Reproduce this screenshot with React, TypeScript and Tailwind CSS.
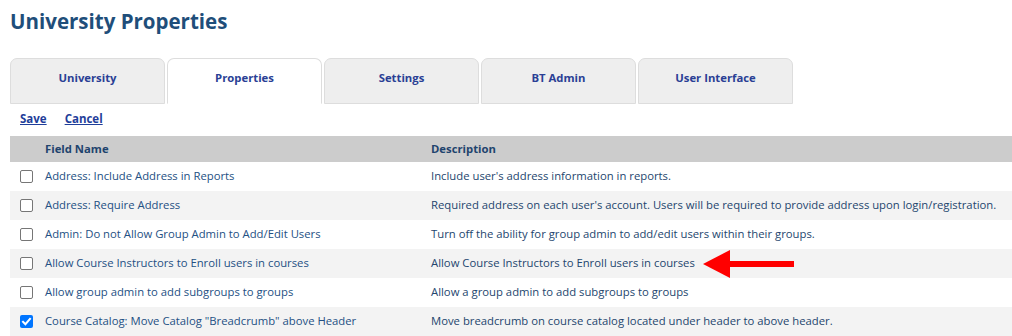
import React from "react";

const tabs = ["University", "Properties", "Settings", "BT Admin", "User Interface"];

const rows: { name: string; desc: string; checked?: boolean; arrow?: boolean }[] = [
  { name: "Address: Include Address in Reports", desc: "Include user's address information in reports." },
  { name: "Address: Require Address", desc: "Required address on each user's account. Users will be required to provide address upon login/registration." },
  { name: "Admin: Do not Allow Group Admin to Add/Edit Users", desc: "Turn off the ability for group admin to add/edit users within their groups." },
  { name: "Allow Course Instructors to Enroll users in courses", desc: "Allow Course Instructors to Enroll users in courses", arrow: true },
  { name: "Allow group admin to add subgroups to groups", desc: "Allow a group admin to add subgroups to groups" },
  { name: "Course Catalog: Move Catalog \"Breadcrumb\" above Header", desc: "Move breadcrumb on course catalog located under header to above header.", checked: true },
];

function Checkbox({ checked }: { checked?: boolean }) {
  if (checked) {
    return (
      <span className="flex h-[13px] w-[13px] items-center justify-center rounded-[2px] bg-[#0075ff]">
        <svg width="11" height="11" viewBox="0 0 11 11">
          <path d="M2 5.8 L4.4 8.2 L9 2.8" stroke="white" strokeWidth="2" fill="none" strokeLinecap="square" />
        </svg>
      </span>
    );
  }
  return <span className="block h-[13px] w-[13px] rounded-[2px] border border-[#767676] bg-white" />;
}

export default function App() {
  return (
    <div className="w-[1012px] h-[336px] overflow-hidden bg-white pl-[10px] text-[11.3px]" style={{ fontFamily: "'Open Sans', 'Noto Sans', sans-serif" }}>
      <h1 className="pt-[7px] h-[58px] text-[20.5px] font-bold leading-[28px] text-[#1f4e7a]">University Properties</h1>
      <div className="flex gap-[2px]">
        {tabs.map((t) => (
          <div
            key={t}
            className={
              "flex h-[46px] w-[155px] items-center justify-center rounded-t-[7px] border border-[#dddddd] pb-[6px] text-[11.3px] font-bold text-[#2a3f95] " +
              (t === "Properties" ? "bg-white border-b-white" : "bg-[#eeeeee]")
            }
          >
            {t}
          </div>
        ))}
      </div>
      <div className="flex h-[32px] items-center gap-[18px] pl-[10px] text-[11.5px] font-bold text-[#1f3e9a] pb-[2px]">
        <a href="#" className="underline">Save</a>
        <a href="#" className="underline">Cancel</a>
      </div>
      <div className="flex h-[26px] items-center bg-[#cccccc] text-[11.3px] font-bold text-[#1f446e]">
        <div className="w-[421px] shrink-0 pl-[35px]">Field Name</div>
        <div>Description</div>
      </div>
      {rows.map((r, i) => (
        <div key={i} className={"flex h-[29px] items-center text-[11.3px] " + (i % 2 === 1 ? "bg-[#f3f3f3]" : "bg-white")}>
          <div className="flex w-[421px] shrink-0 items-center">
            <div className="w-[35px] pl-[10px]">
              <Checkbox checked={r.checked} />
            </div>
            <span className="text-[#245083]">{r.name}</span>
          </div>
          <div className="flex items-center text-[#24466e] whitespace-nowrap">
            <span>{r.desc}</span>
            {r.arrow && (
              <svg className="ml-[8px]" width="92" height="28" viewBox="0 0 92 28">
                <polygon points="0,14 27,0 27,28" fill="#ff0000" />
                <rect x="26" y="11" width="65" height="6" fill="#ff0000" />
              </svg>
            )}
          </div>
        </div>
      ))}
    </div>
  );
}
